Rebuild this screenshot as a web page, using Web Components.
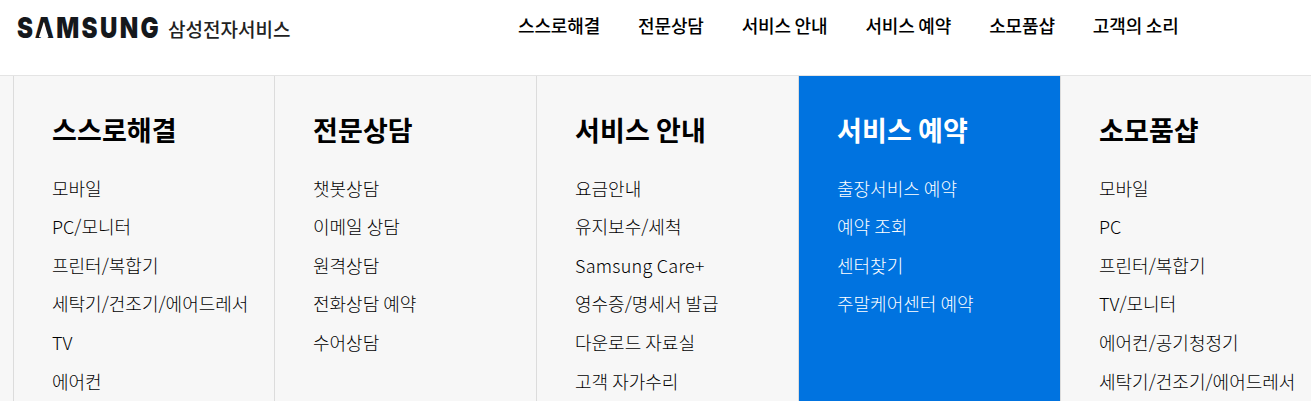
<!DOCTYPE html>
<html lang="ko">
<head>
<meta charset="utf-8">
<title>삼성전자서비스</title>
<style>
html, body { margin: 0; height: 401px; overflow: hidden; background: #fff; }
body { font-family: "Noto Sans CJK KR", "Noto Sans", sans-serif; color: #000; }
</style>
</head>
<body>
<site-header>
  <site-logo slot="logo"></site-logo>
  <nav-link>스스로해결</nav-link>
  <nav-link>전문상담</nav-link>
  <nav-link>서비스 안내</nav-link>
  <nav-link>서비스 예약</nav-link>
  <nav-link>소모품샵</nav-link>
  <nav-link>고객의 소리</nav-link>
</site-header>
<mega-menu>
  <menu-column heading="스스로해결">
    <menu-item>모바일</menu-item>
    <menu-item>PC/모니터</menu-item>
    <menu-item>프린터/복합기</menu-item>
    <menu-item>세탁기/건조기/에어드레서</menu-item>
    <menu-item>TV</menu-item>
    <menu-item>에어컨</menu-item>
  </menu-column>
  <menu-column heading="전문상담">
    <menu-item>챗봇상담</menu-item>
    <menu-item>이메일 상담</menu-item>
    <menu-item>원격상담</menu-item>
    <menu-item>전화상담 예약</menu-item>
    <menu-item>수어상담</menu-item>
  </menu-column>
  <menu-column heading="서비스 안내">
    <menu-item>요금안내</menu-item>
    <menu-item>유지보수/세척</menu-item>
    <menu-item style="letter-spacing: .25px">Samsung Care+</menu-item>
    <menu-item>영수증/명세서 발급</menu-item>
    <menu-item>다운로드 자료실</menu-item>
    <menu-item>고객 자가수리</menu-item>
  </menu-column>
  <menu-column heading="서비스 예약" active>
    <menu-item>출장서비스 예약</menu-item>
    <menu-item>예약 조회</menu-item>
    <menu-item>센터찾기</menu-item>
    <menu-item>주말케어센터 예약</menu-item>
  </menu-column>
  <menu-column heading="소모품샵">
    <menu-item>모바일</menu-item>
    <menu-item>PC</menu-item>
    <menu-item>프린터/복합기</menu-item>
    <menu-item>TV/모니터</menu-item>
    <menu-item>에어컨/공기청정기</menu-item>
    <menu-item>세탁기/건조기/에어드레서</menu-item>
  </menu-column>
</mega-menu>

<script>
class SiteHeader extends HTMLElement {
  constructor() {
    super();
    this.attachShadow({ mode: "open" });
    this.shadowRoot.innerHTML = `
<style>
:host { display: flex; height: 75px; border-bottom: 1px solid #e4e4e4; box-sizing: content-box; }
.logo { display: block; width: 518px; flex: none; }
nav { display: flex; gap: 38px; padding-top: 11px; }
</style>
<div class="logo"><slot name="logo"></slot></div>
<nav><slot></slot></nav>`;
  }
}
customElements.define("site-header", SiteHeader);

class SiteLogo extends HTMLElement {
  constructor() {
    super();
    this.attachShadow({ mode: "open" });
    this.shadowRoot.innerHTML = `
<style>
:host { display: flex; align-items: center; padding: 12px 0 0 17px; color: #15181c; }
.mark {
  font: 900 24px/30px "Inter", "Liberation Sans", sans-serif;
  letter-spacing: 2.4px;
  width: 141px;
  white-space: nowrap;
  transform: scaleY(1.2);
}
/* the wordmark's A has no crossbar: cover it with the header white */
.a { position: relative; }
.a::after {
  content: "";
  position: absolute;
  left: 4px;
  width: 10px;
  top: 10px;
  height: 13px;
  background: #fff;
  clip-path: polygon(50% 0, 100% 100%, 0 100%);
}
.name {
  font: 500 19px/30px "Noto Sans CJK KR", sans-serif;
  color: #222;
  margin-left: 10px;
  padding-top: 2px;
  white-space: nowrap;
}
</style>
<span class="mark">S<span class="a">A</span>MSUNG</span><span class="name">삼성전자서비스</span>`;
  }
}
customElements.define("site-logo", SiteLogo);

class NavLink extends HTMLElement {
  constructor() {
    super();
    this.attachShadow({ mode: "open" });
    this.shadowRoot.innerHTML = `
<style>
:host { display: block; font-size: 18px; font-weight: 500; line-height: 28px; letter-spacing: -0.15px; word-spacing: -1.2px; white-space: nowrap; color: #000; }
</style>
<slot></slot>`;
  }
}
customElements.define("nav-link", NavLink);

class MegaMenu extends HTMLElement {
  constructor() {
    super();
    this.attachShadow({ mode: "open" });
    this.shadowRoot.innerHTML = `
<style>
:host { display: grid; grid-template-columns: 261px 262px 262px 262px 251px; height: 325px; padding-left: 13px; background: #f7f7f7; overflow: hidden; }
</style>
<slot></slot>`;
  }
}
customElements.define("mega-menu", MegaMenu);

const menuColumnTemplate = document.createElement("template");
menuColumnTemplate.innerHTML = `
<style>
:host { display: block; box-sizing: border-box; border-left: 1px solid #dcdcdc; padding: 34px 0 0 38px; color: #000; word-spacing: -1px; }
:host([active]) { background: #0073e0; color: #fff; }
h2 { margin: 0 0 18.7px; font-size: 27px; line-height: 40px; font-weight: 700; letter-spacing: .1px; word-spacing: -1.5px; white-space: nowrap; }
.items { display: flex; flex-direction: column; }
</style>
<h2></h2>
<div class="items"><slot></slot></div>`;
class MenuColumn extends HTMLElement {
  constructor() {
    super();
    this.attachShadow({ mode: "open" });
    this.shadowRoot.appendChild(menuColumnTemplate.content.cloneNode(true));
    this.shadowRoot.querySelector("h2").textContent = this.getAttribute("heading");
  }
}
customElements.define("menu-column", MenuColumn);

class MenuItem extends HTMLElement {
  constructor() {
    super();
    this.attachShadow({ mode: "open" });
    this.shadowRoot.innerHTML = `
<style>
:host { display: block; font-size: 18px; font-weight: 300; line-height: 38.6px; white-space: nowrap; }
</style>
<slot></slot>`;
  }
}
customElements.define("menu-item", MenuItem);
</script>
</body>
</html>
